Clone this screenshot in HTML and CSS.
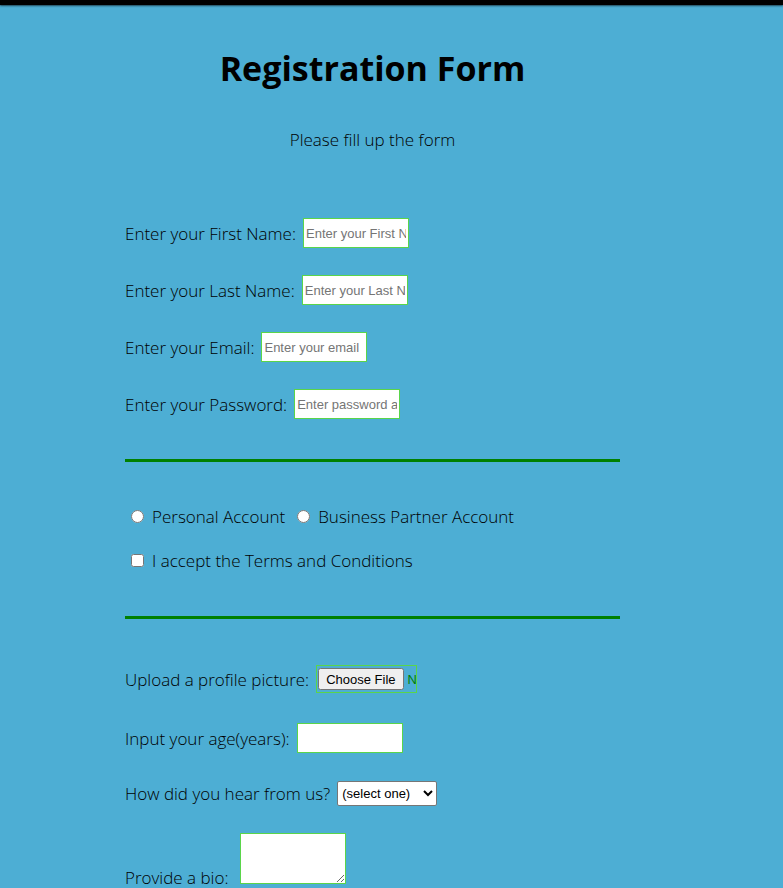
FILE: index.html
```html
<!DOCTYPE html>
<html>
<head>
<meta charset="utf-8">
<title>Registration Form</title>
<link rel="stylesheet" href="styles.css">
</head>
<body>
<div class="topbar"></div>
<main class="wrap">
  <h1 class="title">Registration Form</h1>
  <p class="subtitle">Please fill up the form</p>
  <form class="form">
    <div class="row"><label class="lbl">Enter your First Name:</label><input class="field" type="text" placeholder="Enter your First Name"></div>
    <div class="row"><label class="lbl">Enter your Last Name:</label><input class="field" type="text" placeholder="Enter your Last Name"></div>
    <div class="row"><label class="lbl">Enter your Email:</label><input class="field" type="email" placeholder="Enter your email"></div>
    <div class="row"><label class="lbl">Enter your Password:</label><input class="field" type="password" placeholder="Enter password and confirm"></div>
    <hr class="rule">
    <div class="opts">
      <label class="opt"><input type="radio" name="acc" class="box"> Personal Account</label>
      <label class="opt"><input type="radio" name="acc" class="box"> Business Partner Account</label>
    </div>
    <div class="opts check"><label class="opt"><input type="checkbox" class="box"> I accept the Terms and Conditions</label></div>
    <hr class="rule rule2">
    <div class="row up"><label class="lbl">Upload a profile picture:</label><input class="file" type="file"></div>
    <div class="row"><label class="lbl">Input your age(years):</label><input class="field" type="number"></div>
    <div class="row sel"><label class="lbl">How did you hear from us?</label><select class="select"><option>(select one)</option><option>Friends</option><option>Internet</option></select></div>
    <div class="bio"><label class="lbl">Provide a bio:</label> <textarea class="area"></textarea></div>
  </form>
</main>
</body>
</html>
```
FILE: styles.css
```css
html, body { margin: 0; padding: 0; }
body {
  background: #4daed4;
  font-family: "Open Sans", "Noto Sans", sans-serif;
  color: #000;
  height: 888px;
  overflow: hidden;
}
.topbar {
  height: 5px;
  background: #000;
  box-shadow: 0 1px 2px rgba(0,0,0,0.6);
}
.wrap {
  width: 495px;
  margin-left: 125px;
}
.title {
  margin: 43px 0 0;
  text-align: center;
  font-family: "Open Sans", sans-serif;
  font-weight: 700;
  font-size: 34px;
  line-height: 40px;
}
.subtitle {
  margin: 41px 0 0;
  text-align: center;
  font-size: 17px;
  font-weight: 300;
  line-height: 22px;
}
.form { margin-top: 67px; }
.row {
  display: flex;
  align-items: center;
  height: 30px;
  margin-bottom: 27px;
}
.lbl {
  font-size: 17px;
  font-weight: 300;
  margin-right: 7px;
  white-space: nowrap;
}
.field {
  box-sizing: border-box;
  width: 106px;
  height: 30px;
  border: 1px solid #5ad54a;
  background: #fff;
  padding: 1px 2px;
  font-family: "Liberation Sans", Arial, sans-serif;
  font-size: 13px;
  outline: none;
}
.field::placeholder { color: #757575; }
.rule {
  border: none;
  height: 3px;
  background: #008000;
  margin: 40px 0 0;
}
.opts {
  display: flex;
  align-items: center;
  gap: 6px;
  margin-top: 42px;
  height: 24px;
}
.check { margin-top: 20px; }
.opt {
  font-size: 17px;
  font-weight: 300;
  display: flex;
  align-items: center;
}
.box {
  margin: 0 8px 0 6px;
  width: 13px;
  height: 13px;
}
.rule2 { margin-top: 44px; }
.up { margin-top: 46px; height: 28px; margin-bottom: 30px; }
.file {
  box-sizing: border-box;
  width: 101px;
  height: 28px;
  border: 1px solid #5ad54a;
  color: #008000;
  font-family: "Liberation Sans", Arial, sans-serif;
  font-size: 13px;
  overflow: hidden;
  padding: 0;
}
.file::file-selector-button {
  font-family: "Liberation Sans", Arial, sans-serif;
  font-size: 13px;
  margin: 0 4px 0 0;
  height: 22px;
  margin-top: 2px;
  margin-left: 1px;
}
.sel { height: 26px; }
.select {
  height: 25px;
  width: 100px;
  font-family: "Liberation Sans", Arial, sans-serif;
  font-size: 13px;
  background: #fff;
  border: 1px solid #767676;
  border-radius: 2px;
}
.bio { margin-top: 0; }
.area {
  box-sizing: border-box;
  width: 106px;
  height: 51px;
  border: 1px solid #5ad54a;
  background: #fff;
  vertical-align: baseline;
  margin-left: 0;
}
```
